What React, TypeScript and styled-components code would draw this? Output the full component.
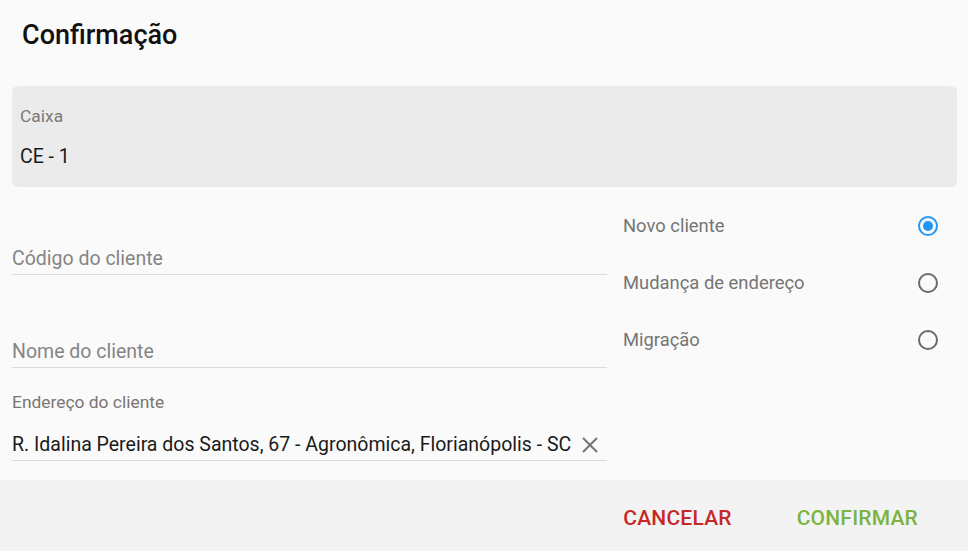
import React, { useState } from 'react';
import styled, { createGlobalStyle } from 'styled-components';

const GlobalStyle = createGlobalStyle`
  html, body {
    margin: 0;
    padding: 0;
    background: #fafafa;
    font-family: Roboto, "Liberation Sans", Arial, sans-serif;
    color: #212121;
  }
`;

const Page = styled.div`
  display: flex;
  flex-direction: column;
  width: 968px;
  height: 551px;
  background: #fafafa;
  overflow: hidden;
`;

const Header = styled.div`
  height: 70px;
  display: flex;
  align-items: center;
  padding-left: 22px;
`;

const Title = styled.h1`
  margin: 0;
  font-size: 27px;
  font-weight: 500;
  color: #111;
`;

const Body = styled.div`
  flex: 1;
  padding: 16px 11px 0 12px;
`;

const FilledBox = styled.div`
  height: 101px;
  box-sizing: border-box;
  background: #ebebeb;
  border-radius: 6px;
  padding: 18px 8px 0 8px;
`;

const FilledLabel = styled.div`
  font-size: 17.4px;
  line-height: 24px;
  color: #7a7a7a;
`;

const FilledValue = styled.div`
  margin-top: 17px;
  font-size: 19.5px;
  line-height: 24px;
  color: #1a1a1a;
`;

const FormRow = styled.div`
  display: flex;
`;

const LeftColumn = styled.div`
  flex: 0 0 595px;
  display: flex;
  flex-direction: column;
`;

const RightColumn = styled.div`
  flex: 1;
  padding: 10px 19px 0 16px;
  display: flex;
  flex-direction: column;
`;

const Field = styled.div<{ $gap: number }>`
  margin-top: ${(p) => p.$gap}px;
`;

const FieldLabel = styled.div`
  font-size: 17.4px;
  line-height: 20px;
  color: #7b7474;
  margin-bottom: 17px;
`;

const InputRow = styled.div<{ $tall?: boolean }>`
  display: flex;
  align-items: center;
  height: ${(p) => (p.$tall ? 31 : 30)}px;
  border-bottom: 1px solid #dcdcdc;
`;

const Input = styled.input`
  flex: 1;
  min-width: 0;
  border: none;
  outline: none;
  background: transparent;
  padding: 0;
  font-family: inherit;
  font-size: 19.5px;
  line-height: 28px;
  color: #1a1a1a;
  &::placeholder {
    color: #858585;
  }
`;

const ClearButton = styled.button`
  border: none;
  background: transparent;
  padding: 0;
  width: 22px;
  height: 22px;
  display: flex;
  align-items: center;
  justify-content: center;
  margin-left: 6px;
  margin-right: 6px;
  cursor: pointer;
  color: #757575;
`;

const RadioRow = styled.label`
  height: 57px;
  display: flex;
  align-items: center;
  justify-content: space-between;
  cursor: pointer;
`;

const RadioText = styled.span`
  font-size: 18.4px;
  color: #757575;
`;

const RadioCircle = styled.span<{ $checked: boolean }>`
  width: 20px;
  height: 20px;
  box-sizing: border-box;
  border-radius: 50%;
  border: 2px solid ${(p) => (p.$checked ? '#2196f3' : '#6a6a6a')};
  display: flex;
  align-items: center;
  justify-content: center;
  &::after {
    content: '';
    width: 10px;
    height: 10px;
    border-radius: 50%;
    background: ${(p) => (p.$checked ? '#2196f3' : 'transparent')};
  }
`;

const Footer = styled.div`
  height: 70px;
  box-sizing: border-box;
  padding-top: 4px;
  background: #f3f3f3;
  box-shadow: 0 -1px 2px rgba(0, 0, 0, 0.03);
  display: flex;
  align-items: center;
  justify-content: flex-end;
  padding-right: 30px;
  gap: 25px;
`;

const ActionButton = styled.button<{ $tone: 'cancel' | 'confirm' }>`
  border: none;
  background: transparent;
  font-family: inherit;
  font-size: 21px;
  font-weight: 500;
  letter-spacing: 0.2px;
  padding: 8px 20px;
  cursor: pointer;
  color: ${(p) => (p.$tone === 'cancel' ? '#c62828' : '#7cb342')};
`;

const options = ['Novo cliente', 'Mudança de endereço', 'Migração'];

export default function App() {
  const [selected, setSelected] = useState('Novo cliente');
  const [address, setAddress] = useState(
    'R. Idalina Pereira dos Santos, 67 - Agronômica, Florianópolis - SC'
  );

  return (
    <>
      <GlobalStyle />
      <Page>
        <Header>
          <Title>Confirmação</Title>
        </Header>
        <Body>
          <FilledBox>
            <FilledLabel>Caixa</FilledLabel>
            <FilledValue>CE - 1</FilledValue>
          </FilledBox>
          <FormRow>
            <LeftColumn>
              <Field $gap={57}>
                <InputRow>
                  <Input placeholder="Código do cliente" />
                </InputRow>
              </Field>
              <Field $gap={62}>
                <InputRow>
                  <Input placeholder="Nome do cliente" />
                </InputRow>
              </Field>
              <Field $gap={24}>
                <FieldLabel>Endereço do cliente</FieldLabel>
                <InputRow $tall>
                  <Input value={address} onChange={(e) => setAddress(e.target.value)} />
                  <ClearButton onClick={() => setAddress('')}>
                    <svg width="18" height="18" viewBox="0 0 18 18">
                      <path
                        d="M2 2 L16 16 M16 2 L2 16"
                        stroke="currentColor"
                        strokeWidth="2"
                        fill="none"
                      />
                    </svg>
                  </ClearButton>
                </InputRow>
              </Field>
            </LeftColumn>
            <RightColumn>
              {options.map((opt) => (
                <RadioRow key={opt} onClick={() => setSelected(opt)}>
                  <RadioText>{opt}</RadioText>
                  <RadioCircle $checked={selected === opt} />
                </RadioRow>
              ))}
            </RightColumn>
          </FormRow>
        </Body>
        <Footer>
          <ActionButton $tone="cancel">CANCELAR</ActionButton>
          <ActionButton $tone="confirm">CONFIRMAR</ActionButton>
        </Footer>
      </Page>
    </>
  );
}
